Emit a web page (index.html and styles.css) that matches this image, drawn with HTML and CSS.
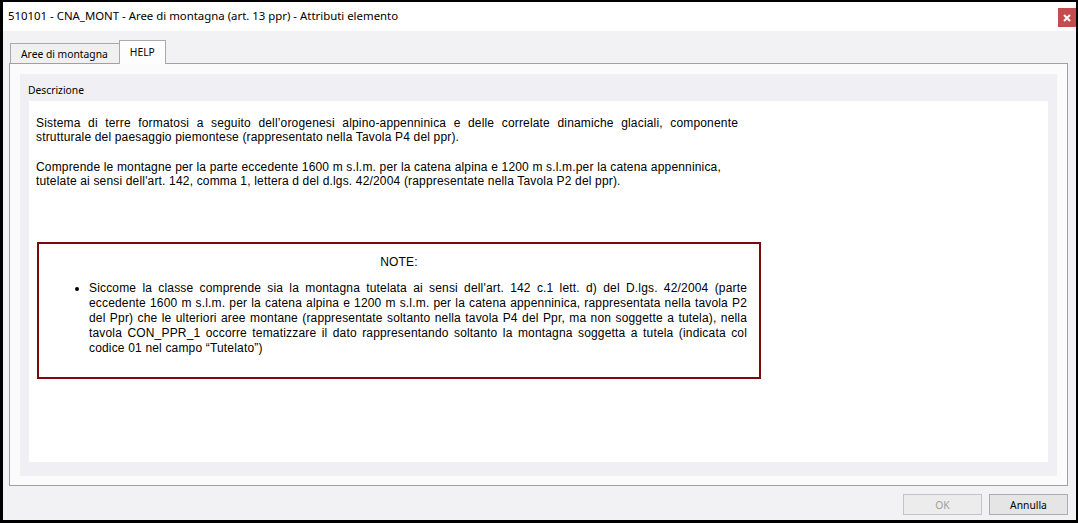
FILE: index.html
```html
<!DOCTYPE html>
<html lang="it">
<head>
<meta charset="utf-8">
<title>Attributi elemento</title>
<link rel="stylesheet" href="styles.css">
</head>
<body>
<div class="window">
  <div class="titlebar">
    <span class="title">510101 - CNA_MONT - Aree di montagna (art. 13 ppr) - Attributi elemento</span>
    <button class="close" aria-label="Chiudi">
      <svg width="8" height="8" viewBox="0 0 8 8"><path d="M1 1 L7 7 M7 1 L1 7" stroke="#fff" stroke-width="2"/></svg>
    </button>
  </div>
  <div class="body">
    <div class="tabs">
      <div class="tab">Aree di montagna</div>
      <div class="tab active">HELP</div>
    </div>
    <div class="panel">
      <div class="group">
        <div class="group-label">Descrizione</div>
        <div class="content">
          <div class="text">
            <p class="para">Sistema di terre formatosi a seguito dell’orogenesi alpino-appenninica e delle correlate dinamiche glaciali, componente strutturale del paesaggio piemontese (rappresentato nella Tavola P4 del ppr).</p>
            <p class="para">Comprende le montagne per la parte eccedente 1600 m s.l.m. per la catena alpina e 1200 m s.l.m.per la catena appenninica,<br>tutelate ai sensi dell'art. 142, comma 1, lettera d del d.lgs. 42/2004 (rappresentate nella Tavola P2 del ppr).</p>
          </div>
          <div class="note">
            <div class="note-title">NOTE:</div>
            <ul class="note-list">
              <li>Siccome la classe comprende sia la montagna tutelata ai sensi dell'art. 142 c.1 lett. d) del D.lgs. 42/2004 (parte eccedente 1600 m s.l.m. per la catena alpina e 1200 m s.l.m. per la catena appenninica, rappresentata nella tavola P2 del Ppr) che le ulteriori aree montane (rappresentate soltanto nella tavola P4 del Ppr, ma non soggette a tutela), nella tavola CON_PPR_1 occorre tematizzare il dato rappresentando soltanto la montagna soggetta a tutela (indicata col codice 01 nel campo “Tutelato”)</li>
            </ul>
          </div>
        </div>
      </div>
    </div>
    <div class="buttons">
      <button class="btn" disabled>OK</button>
      <button class="btn">Annulla</button>
    </div>
  </div>
</div>
</body>
</html>
```

FILE: styles.css
```css
* { box-sizing: border-box; }
html, body { margin: 0; padding: 0; }
body {
  width: 1078px;
  height: 523px;
  overflow: hidden;
  background: #000;
  font-family: "Segoe UI", "Noto Sans", "Open Sans", sans-serif;
}
.window {
  width: 1078px;
  height: 523px;
  border-style: solid;
  border-color: #000;
  border-width: 2px 2px 3px 3px;
  background: #f2f1f4;
  display: flex;
  flex-direction: column;
}
.titlebar {
  height: 29px;
  background: #fff;
  display: flex;
  align-items: flex-start;
  justify-content: space-between;
}
.title {
  padding: 6px 0 0 5px;
  font-size: 11.4px;
  color: #000;
}
.close {
  margin-top: 6px;
  width: 18px;
  height: 19px;
  border: none;
  padding: 0;
  background: #c44c4c;
  display: flex;
  align-items: center;
  justify-content: center;
}
.body {
  flex: 1;
  padding: 9px 8px 0 6px;
  display: flex;
  flex-direction: column;
}
.tabs {
  display: flex;
  align-items: flex-end;
  height: 23px;
  padding-left: 1px;
}
.tab {
  height: 20px;
  padding: 0 11px 0 10px;
  border: 1px solid #a9a9a9;
  border-bottom: none;
  background: #f0f0f0;
  font-size: 10.3px;
  line-height: 21px;
  color: #000;
}
.tab:first-child { border-right: none; }
.tab.active {
  height: 24px;
  padding: 0 10px 0 10px;
  background: #fdfdfd;
  line-height: 23px;
  position: relative;
  top: 1px;
}
.panel {
  height: 423px;
  border: 1px solid #a0a0a0;
  background: #fbfbfc;
  padding: 10px 10px 9px 10px;
}
.group {
  height: 100%;
  background: #f0eff3;
  padding: 0 9px 14px 9px;
  display: flex;
  flex-direction: column;
}
.group-label {
  height: 27px;
  font-size: 10.3px;
  line-height: 32px;
  margin-left: -1px;
  color: #000;
}
.content {
  flex: 1;
  background: #fff;
  padding: 15px 0 0 7px;
  font-family: "Liberation Sans", Arial, sans-serif;
  font-size: 12px;
  letter-spacing: 0.17px;
  color: #000;
}
.text {
  width: 702px;
}
.para {
  margin: 0 0 16px 0;
  text-align: justify;
  line-height: 14px;
}
.note {
  margin: 54px 0 0 1px;
  width: 724px;
  height: 137px;
  border: 2px solid #7d0a0a;
  padding: 11px 12px 0 0;
  line-height: 15px;
}
.note-title {
  text-align: center;
  padding-left: 12px;
  margin-bottom: 11px;
}
.note-list {
  margin: 0;
  padding-left: 50px;
}
.note-list li {
  text-align: justify;
}
.buttons {
  display: flex;
  justify-content: flex-end;
  gap: 7px;
  padding-top: 8px;
}
.btn {
  width: 79px;
  height: 21px;
  border: 1px solid #adadad;
  background: #e5e5e5;
  font-family: "Segoe UI", "Noto Sans", "Open Sans", sans-serif;
  font-size: 10.3px;
  color: #000;
  padding: 0;
}
.btn:disabled {
  color: #a0a0a0;
  background: #ececec;
  border-color: #c4c4c4;
}
```
